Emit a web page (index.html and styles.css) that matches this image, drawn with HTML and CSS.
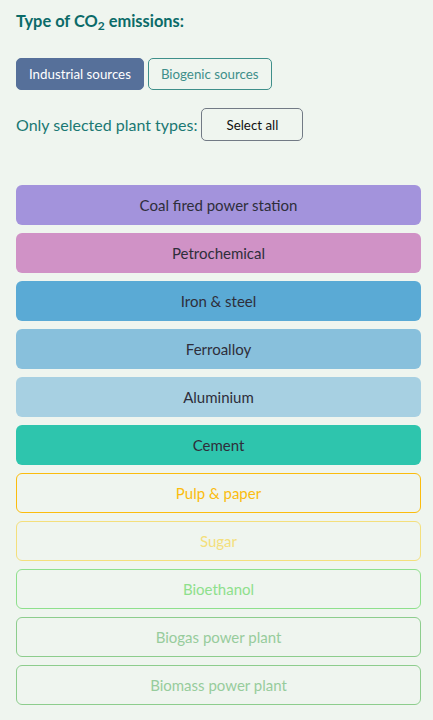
FILE: index.html
```html
<!DOCTYPE html>
<html>
<head>
<meta charset="utf-8">
<link rel="stylesheet" href="styles.css">
</head>
<body>
<div class="panel">
  <h2 class="title">Type of CO<sub>2</sub> emissions:</h2>
  <div class="toggles">
    <button class="tog active">Industrial sources</button>
    <button class="tog">Biogenic sources</button>
  </div>
  <div class="selrow">
    <span class="sellabel">Only selected plant types:</span>
    <button class="selall">Select all</button>
  </div>
  <div class="list">
    <div class="item coal">Coal fired power station</div>
    <div class="item petro">Petrochemical</div>
    <div class="item iron">Iron &amp; steel</div>
    <div class="item ferro">Ferroalloy</div>
    <div class="item alu">Aluminium</div>
    <div class="item cement">Cement</div>
    <div class="item out pulp">Pulp &amp; paper</div>
    <div class="item out sugar">Sugar</div>
    <div class="item out bioeth">Bioethanol</div>
    <div class="item out biogas">Biogas power plant</div>
    <div class="item out biomass">Biomass power plant</div>
  </div>
</div>
</body>
</html>
```
FILE: styles.css
```css
html, body {
  margin: 0;
  padding: 0;
  background: #eff5ef;
}
body {
  font-family: Lato, "Open Sans", sans-serif;
}
.panel {
  padding: 11px 12px 0 16px;
}
.title {
  margin: 0;
  font-size: 16.4px;
  font-weight: 700;
  color: #0b6b69;
  line-height: 20px;
}
.title sub {
  font-size: 12px;
  line-height: 0;
  vertical-align: -3px;
}
.toggles {
  display: flex;
  gap: 4px;
  margin-top: 27px;
}
.tog {
  font-family: inherit;
  font-size: 13.3px;
  height: 32px;
  padding: 0 12px;
  border-radius: 5px;
  border: 1px solid #3e8f8a;
  background: transparent;
  color: #3e8f8a;
}
.tog.active {
  background: #56709a;
  border-color: #56709a;
  color: #ffffff;
}
.selrow {
  display: flex;
  align-items: center;
  gap: 4px;
  margin-top: 18px;
}
.sellabel {
  font-size: 16px;
  color: #1a7873;
}
.selall {
  font-family: inherit;
  font-size: 13.3px;
  width: 102px;
  height: 33px;
  border: 1px solid #727a85;
  border-radius: 5px;
  background: transparent;
  color: #111;
}
.list {
  display: flex;
  flex-direction: column;
  gap: 8px;
  margin-top: 44px;
}
.item {
  height: 40px;
  box-sizing: border-box;
  border-radius: 6px;
  display: flex;
  align-items: center;
  justify-content: center;
  font-size: 15px;
  color: #2e2e3a;
}
.coal { background: #a393dc; }
.petro { background: #d092c6; }
.iron { background: #5aaad5; }
.ferro { background: #88c0dc; }
.alu { background: #a7d0e2; }
.cement { background: #2ec5ad; }
.out { border: 1px solid; background: transparent; }
.pulp { border-color: #fbbc0e; color: #fbbc0e; }
.sugar { border-color: #f4df7c; color: #f4df7c; }
.bioeth { border-color: #8ee08c; color: #8ee08c; }
.biogas { border-color: #8dcd8d; color: #97cc9c; }
.biomass { border-color: #8dcd8d; color: #97cc9c; }
```
